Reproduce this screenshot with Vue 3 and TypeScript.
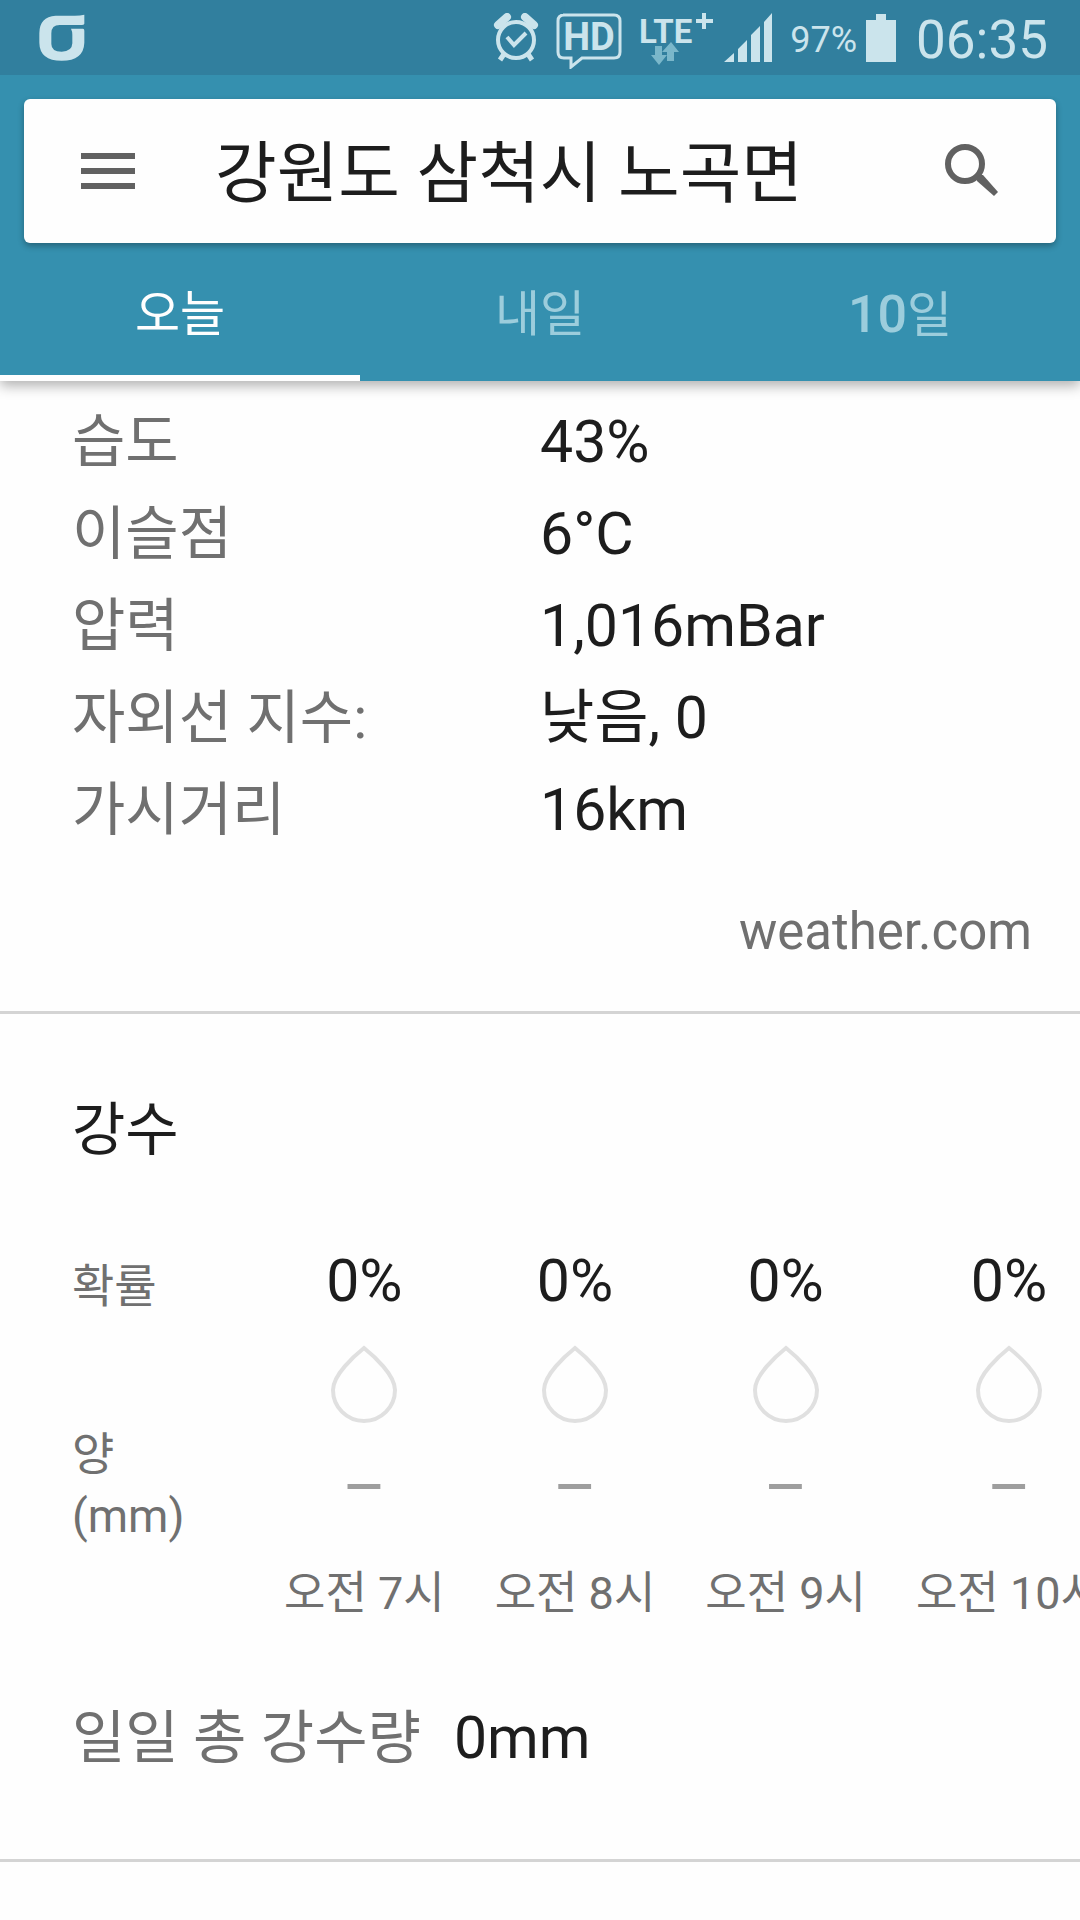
<script setup lang="ts">
import { ref } from 'vue'

interface Tab {
  count?: string
  text: string
}

interface Detail {
  label: string
  value: string
}

interface Hour {
  time: string
  chance: string
  amount: string
}

const place = ref('강원도 삼척시 노곡면')
const tabs: Tab[] = [{ text: '오늘' }, { text: '내일' }, { count: '10', text: '일' }]
const activeTab = ref(0)

const details: Detail[] = [
  { label: '습도', value: '43%' },
  { label: '이슬점', value: '6°C' },
  { label: '압력', value: '1,016mBar' },
  { label: '자외선 지수:', value: '낮음, 0' },
  { label: '가시거리', value: '16km' },
]

const hours: Hour[] = [
  { time: '오전 7시', chance: '0%', amount: '–' },
  { time: '오전 8시', chance: '0%', amount: '–' },
  { time: '오전 9시', chance: '0%', amount: '–' },
  { time: '오전 10시', chance: '0%', amount: '–' },
]
</script>

<template>
  <div class="screen">
    <div class="status">
      <svg class="carrier" width="46" height="48" viewBox="0 0 138 144" aria-hidden="true">
        <path
          d="M136 2v27q-1 4-8 4H62Q37 33 37 58v32q0 23 31 23t32-25V62q0-10-4-18h36q4 0 4 6v36q-2 54-68 54T1 86V58Q1 8 50 5h58q16 0 28-3z"
        />
      </svg>
      <div class="indicators">
        <svg width="46" height="50" viewBox="0 0 46 50" aria-label="알람">
          <circle cx="23" cy="27" r="18" fill="none" stroke="currentColor" stroke-width="4" />
          <path d="M14 24l7 8 12-12" fill="none" stroke="currentColor" stroke-width="4" />
          <path d="M11 41l-4 6M35 41l4 6" stroke="currentColor" stroke-width="5" />
          <path d="M5 12l9-8M41 12l-9-8" stroke="currentColor" stroke-width="8" stroke-linecap="round" />
        </svg>
        <svg class="hd" width="66" height="56" viewBox="0 0 66 56">
          <path
            d="M7 2h51q6 0 6 6v31q0 6-6 6H26L15 54v-9H8q-6 0-6-6V8q0-6 6-6z"
            fill="none"
            stroke="currentColor"
            stroke-width="3"
          />
          <text x="33" y="37" text-anchor="middle" font-size="38">HD</text>
        </svg>
        <svg class="lte" width="76" height="60" viewBox="0 0 76 60">
          <text x="0" y="35" font-size="33">LTE</text>
          <path d="M63 5h4v6h7v4h-7v6h-4v-6h-6v-4h6z" />
          <path d="M16 38h7v9h5l-8 10-8-10h4zM28 53v-9h-5l9-10 8 10h-5v9z" fill="#7ab7ca" />
        </svg>
        <svg width="50" height="50" viewBox="0 0 50 50" aria-label="신호">
          <path d="M1 49L11 40v9zM15 36l9-9v22h-9zM28 22l9-9v36h-9zM41 9l8-9v49h-8z" />
        </svg>
        <span class="percent">97%</span>
        <svg width="30" height="48" viewBox="0 0 30 48" aria-label="배터리">
          <path d="M10 0h10v6h10v42H0V6h10z" />
        </svg>
        <span class="clock">06:35</span>
      </div>
    </div>

    <header class="bar">
      <div class="search">
        <button class="icon-button" type="button" aria-label="메뉴">
          <svg width="54" height="36" viewBox="0 0 54 36">
            <path d="M0 0h54v6H0zM0 15h54v6H0zM0 30h54v6H0z" />
          </svg>
        </button>
        <input v-model="place" class="place" type="text" aria-label="위치" />
        <button class="icon-button" type="button" aria-label="검색">
          <svg width="54" height="54" viewBox="0 0 54 54">
            <circle cx="20" cy="20" r="17" fill="none" stroke="currentColor" stroke-width="6" />
            <path d="M32 37v-3l3-3h3l15 17-4 4z" />
          </svg>
        </button>
      </div>
      <nav class="tabs" role="tablist">
        <button
          v-for="(tab, i) in tabs"
          :key="tab.text"
          class="tab"
          :class="{ active: i === activeTab }"
          type="button"
          role="tab"
          :aria-selected="i === activeTab"
          @click="activeTab = i"
        >
          <span v-if="tab.count" class="count">{{ tab.count }}</span>{{ tab.text }}
        </button>
      </nav>
    </header>

    <main>
      <section class="details">
        <dl>
          <div v-for="d in details" :key="d.label" class="detail">
            <dt>{{ d.label }}</dt>
            <dd>{{ d.value }}</dd>
          </div>
        </dl>
        <a class="source" href="#">weather.com</a>
      </section>

      <section class="rain">
        <h2>강수</h2>
        <div class="forecast">
          <div class="legend">
            <span>확률</span>
            <span class="amount-label">양<br />(mm)</span>
          </div>
          <ul class="hours">
            <li v-for="h in hours" :key="h.time" class="hour">
              <span class="chance">{{ h.chance }}</span>
              <svg class="drop" width="66" height="78" viewBox="0 0 66 78" aria-hidden="true">
                <path
                  d="M33 3C23 11 2 30 2 45a31 31 0 0 0 62 0C64 30 43 11 33 3z"
                  fill="none"
                  stroke="#e0e0e0"
                  stroke-width="4"
                />
              </svg>
              <span class="amount">{{ h.amount }}</span>
              <span class="time">{{ h.time }}</span>
            </li>
          </ul>
        </div>
        <p class="total"><span class="total-label">일일 총 강수량</span><span>0mm</span></p>
      </section>
    </main>
  </div>
</template>

<style>
body {
  background: #fefefe;
}
</style>

<style scoped>
.screen {
  min-height: 100vh;
  overflow: hidden;
  background: #fefefe;
  color: #1d1d1d;
  font-family: Roboto, 'Noto Sans CJK KR', sans-serif;
  font-size: 59px;
}

svg {
  display: block;
  flex: none;
  fill: currentColor;
}

button,
input {
  border: 0;
  padding: 0;
  background: none;
  color: inherit;
  font: inherit;
}

.status {
  position: relative;
  z-index: 1;
  display: flex;
  justify-content: space-between;
  align-items: center;
  height: 75px;
  padding: 0 32px 0 39px;
  background: #317f9e;
  color: #cbe4ec;
}

.indicators {
  display: flex;
  align-items: center;
}

.hd {
  margin: 6px 17px 0 17px;
}

.hd text,
.lte text {
  font-weight: 700;
}

.lte {
  margin-right: 8px;
}

.percent {
  margin: 4px 9px 0 17px;
  font-size: 36px;
  line-height: 40px;
}

.clock {
  margin: 4px 0 0 20px;
  font-size: 53px;
  line-height: 60px;
}

.bar {
  position: relative;
  padding-top: 24px;
  background: #3590af;
  box-shadow: 0 5px 12px rgba(0, 0, 0, 0.3);
}

.search {
  display: flex;
  align-items: center;
  height: 144px;
  margin: 0 24px;
  padding: 0 57px;
  border-radius: 6px;
  background: #fefefe;
  box-shadow: 0 3px 6px rgba(0, 0, 0, 0.3);
}

.icon-button {
  flex: none;
  color: #616161;
}

.place {
  flex: 1;
  min-width: 0;
  margin: 0 24px 0 80px;
  padding-top: 6px;
  font-size: 67px;
  line-height: 96px;
  outline: 0;
}

.tabs {
  display: flex;
}

.tab {
  flex: 1;
  height: 138px;
  padding-top: 12px;
  border-bottom: 6px solid transparent;
  color: #9ccddc;
  font-size: 49px;
  line-height: 60px;
}

.tab.active {
  border-bottom-color: #fefefe;
  color: #fefefe;
}

.count {
  font-size: 52px;
  font-weight: 500;
}

section {
  border-bottom: 3px solid #d4d4d4;
}

.details {
  display: flex;
  flex-direction: column;
  padding: 15px 48px 49px 72px;
}

dl {
  margin: 0;
}

.detail {
  display: flex;
  line-height: 92px;
}

dt {
  flex: none;
  width: 468px;
  color: #707070;
  font-size: 58px;
}

dd {
  margin: 0;
}

.source {
  align-self: flex-end;
  margin-top: 46px;
  color: #707070;
  font-size: 51px;
  line-height: 60px;
  text-decoration: none;
}

.rain {
  padding: 70px 0 85px 72px;
}

h2 {
  margin: 0;
  font-size: 58px;
  font-weight: 400;
  line-height: 92px;
}

.forecast {
  display: flex;
  margin-top: 69px;
}

.legend {
  display: flex;
  flex: none;
  flex-direction: column;
  width: 212px;
  padding-top: 10px;
  color: #707070;
  font-size: 46px;
  line-height: 62px;
}

.amount-label {
  margin-top: 106px;
}

.hours {
  display: flex;
  gap: 50px;
  flex: 1;
  min-width: 0;
  margin: 0;
  padding: 0;
  overflow: hidden;
  list-style: none;
}

.hour {
  display: flex;
  flex: none;
  flex-direction: column;
  align-items: center;
  line-height: 72px;
}

.drop {
  margin: 28px 0;
}

.amount {
  color: #9e9e9e;
  font-size: 67px;
}

.time {
  margin-top: 40px;
  color: #707070;
  font-size: 45px;
  line-height: 62px;
}

.total {
  display: flex;
  gap: 33px;
  margin: 77px 0 0;
  line-height: 72px;
}

.total-label {
  color: #707070;
  font-size: 58px;
}
</style>
